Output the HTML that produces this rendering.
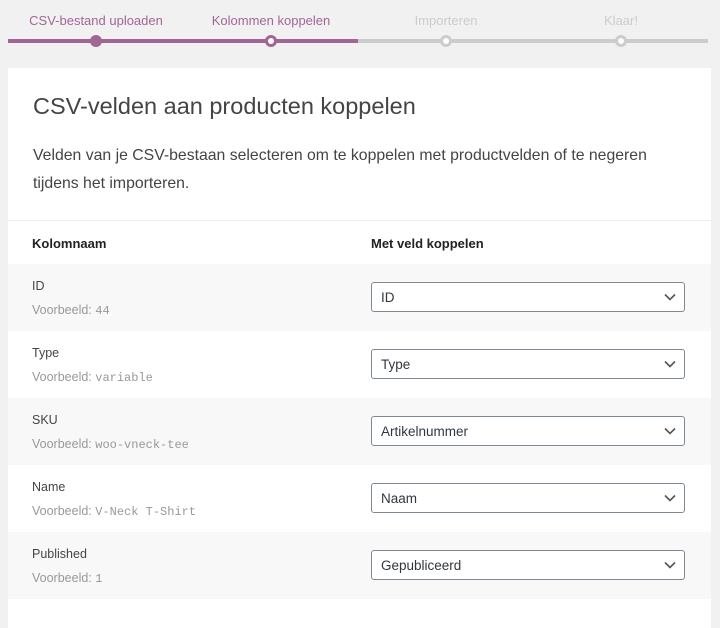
<!DOCTYPE html>
<html><head><meta charset="utf-8"><style>
*{margin:0;padding:0;box-sizing:border-box}
body{width:720px;height:604px;overflow:hidden;background:#f1f1f1;font-family:"Liberation Sans",sans-serif;position:relative;color:#32373c}
.lbl{position:absolute;top:13px;font-size:13px;transform:translateX(-50%);white-space:nowrap}
.line{position:absolute;top:39px;height:4px}
.dot{position:absolute;top:35px;width:12px;height:12px;border-radius:50%;margin-left:-6px}
.card{position:absolute;left:8px;top:68px;width:703px;height:560px;background:#fff}
h1{position:absolute;left:25px;top:25px;font-size:23.5px;font-weight:normal;color:#444}
.desc{position:absolute;left:25px;top:74px;width:670px;font-size:15.8px;line-height:28px;color:#444;white-space:nowrap}
.hr{position:absolute;left:0;right:0;top:152px;border-top:1px solid #eee}
.th{position:absolute;top:168px;font-size:13px;font-weight:bold;color:#222}
.row{position:absolute;left:0;right:0;height:67px}
.row.g{background:#f8f8f8}
.name{position:absolute;left:24px;top:15px;font-size:12.5px;color:#444}
.ex{position:absolute;left:24px;top:39px;font-size:12.5px;color:#999}
.ex code{font-family:"Liberation Mono",monospace;font-size:12px}
.sel{position:absolute;left:363px;top:18px;width:314px;height:30px;border:1px solid #7e8993;border-radius:3px;background:#fff;font-size:13.5px;padding:7px 9px;color:#32373c}
.sel svg{position:absolute;right:8px;top:10px}
</style></head><body>
<div class="line" style="left:8px;width:350px;background:#a16696"></div>
<div class="line" style="left:358px;width:350px;background:#ccc"></div>
<div class="dot" style="left:96px;background:#a16696"></div>
<div class="dot" style="left:271px;background:#a16696;border:3px solid #a16696"><div style="width:6px;height:6px;background:#fff;border-radius:50%"></div></div>
<div class="dot" style="left:446px;border:3px solid #ccc;background:#fff"></div>
<div class="dot" style="left:621px;border:3px solid #ccc;background:#fff"></div>
<div class="lbl" style="left:96px;color:#a16696">CSV-bestand uploaden</div>
<div class="lbl" style="left:271px;color:#a16696">Kolommen koppelen</div>
<div class="lbl" style="left:446px;color:#ccc">Importeren</div>
<div class="lbl" style="left:621px;color:#ccc">Klaar!</div>
<div class="card">
<h1>CSV-velden aan producten koppelen</h1>
<div class="desc">Velden van je CSV-bestaan selecteren om te koppelen met productvelden of te negeren<br>tijdens het importeren.</div>
<div class="hr"></div>
<div class="th" style="left:24px">Kolomnaam</div>
<div class="th" style="left:363px">Met veld koppelen</div>
<div class="row g" style="top:196px"><div class="name">ID</div><div class="ex">Voorbeeld: <code>44</code></div><div class="sel">ID<svg width="12" height="8" viewBox="0 0 12 8"><path d="M1 1.5l5 5 5-5" stroke="#555" stroke-width="1.6" fill="none"/></svg></div></div>
<div class="row" style="top:263px"><div class="name">Type</div><div class="ex">Voorbeeld: <code>variable</code></div><div class="sel">Type<svg width="12" height="8" viewBox="0 0 12 8"><path d="M1 1.5l5 5 5-5" stroke="#555" stroke-width="1.6" fill="none"/></svg></div></div>
<div class="row g" style="top:330px"><div class="name">SKU</div><div class="ex">Voorbeeld: <code>woo-vneck-tee</code></div><div class="sel">Artikelnummer<svg width="12" height="8" viewBox="0 0 12 8"><path d="M1 1.5l5 5 5-5" stroke="#555" stroke-width="1.6" fill="none"/></svg></div></div>
<div class="row" style="top:397px"><div class="name">Name</div><div class="ex">Voorbeeld: <code>V-Neck T-Shirt</code></div><div class="sel">Naam<svg width="12" height="8" viewBox="0 0 12 8"><path d="M1 1.5l5 5 5-5" stroke="#555" stroke-width="1.6" fill="none"/></svg></div></div>
<div class="row g" style="top:464px"><div class="name">Published</div><div class="ex">Voorbeeld: <code>1</code></div><div class="sel">Gepubliceerd<svg width="12" height="8" viewBox="0 0 12 8"><path d="M1 1.5l5 5 5-5" stroke="#555" stroke-width="1.6" fill="none"/></svg></div></div>
</div>
</body></html>
